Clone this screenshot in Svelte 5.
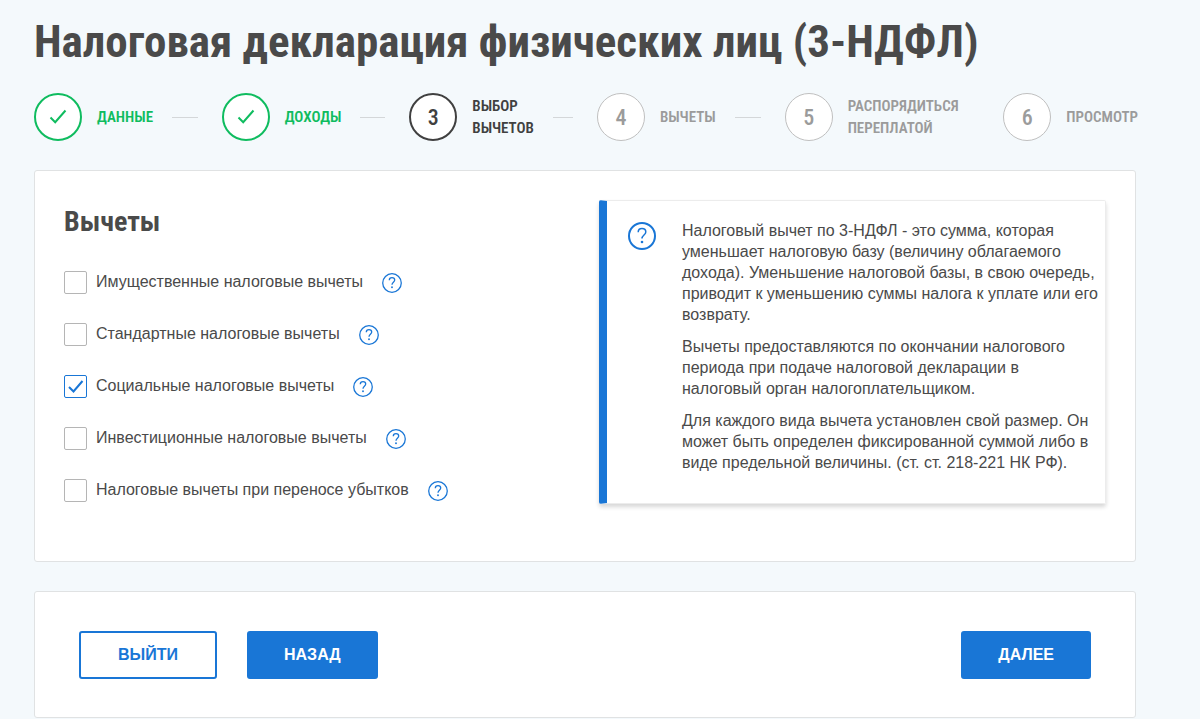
<script>
  const steps = [
    { n: 1, label: 'Данные', status: 'done' },
    { n: 2, label: 'Доходы', status: 'done' },
    { n: 3, label: 'Выбор вычетов', status: 'current' },
    { n: 4, label: 'Вычеты', status: 'next' },
    { n: 5, label: 'Распорядиться переплатой', status: 'next' },
    { n: 6, label: 'Просмотр', status: 'next' }
  ];

  let deductions = $state([
    { id: 'property', label: 'Имущественные налоговые вычеты', checked: false },
    { id: 'standard', label: 'Стандартные налоговые вычеты', checked: false },
    { id: 'social', label: 'Социальные налоговые вычеты', checked: true },
    { id: 'invest', label: 'Инвестиционные налоговые вычеты', checked: false },
    { id: 'losses', label: 'Налоговые вычеты при переносе убытков', checked: false }
  ]);
</script>

{#snippet question()}
  <path d="M10.200 10.200c0-2.200 1.600-3.700 3.800-3.700s3.800 1.400 3.800 3.400c0 3-3.800 3.200-3.800 6.600" />
  <circle class="dot" cx="14" cy="20" r="1.300" />
{/snippet}

<main>
  <h1>Налоговая декларация физических лиц (3-НДФЛ)</h1>

  <ol class="steps">
    {#each steps as step (step.n)}
      <li class={step.status}>
        <span class="circle">
          {#if step.status === 'done'}
            <svg viewBox="0 0 18 16" width="18" height="16" aria-hidden="true">
              <path d="M1.500 8.500 6.200 13.200 16.500 1.500" />
            </svg>
          {:else}
            {step.n}
          {/if}
        </span>
        <span class="label">{step.label}</span>
        {#if step.n < steps.length}<span class="line"></span>{/if}
      </li>
    {/each}
  </ol>

  <section class="card choice">
    <div class="options">
      <h2>Вычеты</h2>
      {#each deductions as item (item.id)}
        <div class="option">
          <input type="checkbox" id={item.id} bind:checked={item.checked} />
          <label for={item.id}>{item.label}</label>
          <button type="button" class="help" aria-label="Справка">
            <svg viewBox="0 0 28 28" width="20" height="20" aria-hidden="true">
              <circle cx="14" cy="14" r="13" />
              {@render question()}
            </svg>
          </button>
        </div>
      {/each}
    </div>

    <aside class="info">
      <svg viewBox="0 0 28 28" width="28" height="28" aria-hidden="true">
        <circle cx="14" cy="14" r="13" />
        {@render question()}
      </svg>
      <div class="copy">
        <p>Налоговый вычет по 3-НДФЛ - это сумма, которая уменьшает налоговую базу (величину облагаемого дохода). Уменьшение налоговой базы, в свою очередь, приводит к уменьшению суммы налога к уплате или его возврату.</p>
        <p>Вычеты предоставляются по окончании налогового периода при подаче налоговой декларации в налоговый орган налогоплательщиком.</p>
        <p>Для каждого вида вычета установлен свой размер. Он может быть определен фиксированной суммой либо в виде предельной величины. (ст. ст. 218-221 НК РФ).</p>
      </div>
    </aside>
  </section>

  <section class="card actions">
    <button type="button" class="btn outline">Выйти</button>
    <button type="button" class="btn">Назад</button>
    <button type="button" class="btn forward">Далее</button>
  </section>
</main>

<style>
  :global(body) {
    margin: 0;
    background: #f4f9fc;
  }

  main {
    padding: 10px 64px 0 34px;
    color: #4a4a4a;
    font: 16px/21px "Liberation Sans", Arial, sans-serif;
  }

  h1,
  h2,
  .steps {
    font-family: "DIN Condensed", "Roboto Condensed", "Liberation Sans Narrow", "Liberation Sans", sans-serif;
  }

  h1 {
    margin: 0;
    font-size: 45px;
    line-height: 64px;
    font-weight: 700;
    white-space: nowrap;
  }

  .steps {
    display: grid;
    grid-template-columns: repeat(4, 188fr) 219fr 133fr;
    margin: 19px 0 29px;
    padding: 0;
    list-style: none;
  }

  .steps li {
    display: flex;
    align-items: center;
    min-width: 0;
    color: #9b9b9b;
  }

  .circle {
    display: flex;
    flex: none;
    align-items: center;
    justify-content: center;
    box-sizing: border-box;
    width: 48px;
    height: 48px;
    margin-right: 15px;
    border: 1px solid #c0c0c0;
    border-radius: 50%;
    background: #fff;
    font-size: 22px;
    font-weight: 500;
  }

  .circle path {
    fill: none;
    stroke: currentColor;
    stroke-width: 2;
  }

  .label {
    font-size: 15px;
    line-height: 22px;
    font-weight: 600;
    text-transform: uppercase;
  }

  .current .label {
    width: min-content;
  }

  .line {
    flex: 1;
    height: 1px;
    margin: 0 24px 0 19px;
    background: #d4d7d9;
  }

  .steps .done {
    color: #0fbc5f;
  }

  .steps .current {
    color: #404040;
  }

  .done .circle,
  .current .circle {
    border: 2px solid currentColor;
  }

  .card {
    border: 1px solid #e0e2e3;
    border-radius: 3px;
    background: #fff;
  }

  .choice {
    display: grid;
    grid-template-columns: 535fr 507fr;
    align-items: start;
    padding: 29px 29px 57px;
  }

  h2 {
    margin: 0 0 27px;
    font-size: 28px;
    line-height: 44px;
    font-weight: 700;
  }

  .option {
    display: flex;
    align-items: center;
    height: 23px;
    margin-bottom: 29px;
  }

  .option:last-child {
    margin-bottom: 0;
  }

  input {
    flex: none;
    box-sizing: border-box;
    width: 23px;
    height: 23px;
    margin: 0 9px 0 0;
    appearance: none;
    border: 1px solid #b5b5b5;
    border-radius: 2px;
    background: #fff;
  }

  input:checked {
    border-color: #1976d6;
    background: #fff url("data:image/svg+xml,%3Csvg xmlns='http://www.w3.org/2000/svg' viewBox='0 0 21 21'%3E%3Cpath d='M4 11 8.500 15.500 17.500 5' fill='none' stroke='%231976d6' stroke-width='2'/%3E%3C/svg%3E") center / 21px 21px no-repeat;
  }

  .option label {
    padding-bottom: 3px;
  }

  .help {
    display: flex;
    margin-left: 19px;
    padding: 0;
    border: 0;
    background: none;
  }

  .help svg,
  .info svg {
    flex: none;
    fill: none;
    stroke: #1976d6;
    stroke-width: 2;
  }

  .info svg path {
    stroke-width: 1.5;
  }

  .help svg {
    stroke-width: 1.8;
  }

  .help .dot,
  .info .dot {
    fill: #1976d6;
    stroke: none;
  }

  .info {
    display: flex;
    gap: 26px;
    box-sizing: border-box;
    padding: 19px 4px 30px 21px;
    border: 1px solid #ececec;
    border-left: 8px solid #1976d6;
    border-radius: 2px;
    box-shadow: 0 3px 4px rgba(0, 0, 0, 0.16);
  }

  .info svg {
    margin-top: 2px;
  }

  p {
    margin: 0 0 11px;
  }

  p:last-child {
    margin-bottom: 0;
  }

  .actions {
    display: flex;
    gap: 30px;
    margin-top: 29px;
    padding: 39px 44px 38px;
  }

  .btn {
    height: 48px;
    padding: 0 35px;
    border: 2px solid #1976d6;
    border-radius: 3px;
    background: #1976d6;
    color: #fff;
    font: 700 16px/20px "Liberation Sans", Arial, sans-serif;
    text-transform: uppercase;
  }

  .outline {
    padding: 0 37px;
    background: #fff;
    color: #1976d6;
  }

  .forward {
    margin-left: auto;
  }
</style>
